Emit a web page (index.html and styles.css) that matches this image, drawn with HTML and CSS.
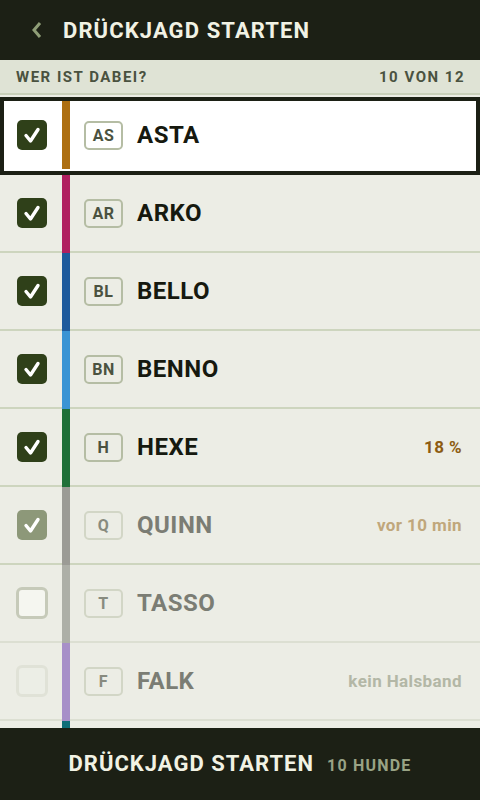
FILE: index.html
```html
<!DOCTYPE html>
<html lang="de">
<head>
<meta charset="UTF-8">
<meta name="viewport" content="width=device-width, initial-scale=1.0">
<title>Drückjagd starten</title>
<link rel="stylesheet" href="styles.css">
</head>
<body>

<div class="screen">
<div class="topbar">
<svg class="back" width="14" height="20" viewBox="0 0 14 20"><path d="M10 3 L4 10 L10 17" fill="none" stroke="#8f9e77" stroke-width="3"/></svg>
<h1>DRÜCKJAGD STARTEN</h1>
</div>

<div class="subhead">
<span>WER IST DABEI?</span>
<span>10 VON 12</span>
</div>

<div class="list">
<div class="row selected">
<div class="check"><div class="box on"><svg width="30" height="30" viewBox="0 0 30 30"><path d="M9 15.5 L13.5 21 L21 9.5" fill="none" stroke="#fff" stroke-width="3.4" stroke-linecap="round" stroke-linejoin="round"/></svg></div></div>
<div class="stripe" style="background:#ad6f12"></div>
<div class="info"><span class="badge">AS</span><span class="name">ASTA</span></div>
</div>

<div class="row">
<div class="check"><div class="box on"><svg width="30" height="30" viewBox="0 0 30 30"><path d="M9 15.5 L13.5 21 L21 9.5" fill="none" stroke="#fff" stroke-width="3.4" stroke-linecap="round" stroke-linejoin="round"/></svg></div></div>
<div class="stripe" style="background:#b01f60"></div>
<div class="info"><span class="badge">AR</span><span class="name">ARKO</span></div>
</div>

<div class="row">
<div class="check"><div class="box on"><svg width="30" height="30" viewBox="0 0 30 30"><path d="M9 15.5 L13.5 21 L21 9.5" fill="none" stroke="#fff" stroke-width="3.4" stroke-linecap="round" stroke-linejoin="round"/></svg></div></div>
<div class="stripe" style="background:#1e5a9c"></div>
<div class="info"><span class="badge">BL</span><span class="name">BELLO</span></div>
</div>

<div class="row">
<div class="check"><div class="box on"><svg width="30" height="30" viewBox="0 0 30 30"><path d="M9 15.5 L13.5 21 L21 9.5" fill="none" stroke="#fff" stroke-width="3.4" stroke-linecap="round" stroke-linejoin="round"/></svg></div></div>
<div class="stripe" style="background:#3a94d4"></div>
<div class="info"><span class="badge">BN</span><span class="name">BENNO</span></div>
</div>

<div class="row">
<div class="check"><div class="box on"><svg width="30" height="30" viewBox="0 0 30 30"><path d="M9 15.5 L13.5 21 L21 9.5" fill="none" stroke="#fff" stroke-width="3.4" stroke-linecap="round" stroke-linejoin="round"/></svg></div></div>
<div class="stripe" style="background:#1f6f38"></div>
<div class="info"><span class="badge">H</span><span class="name">HEXE</span><span class="meta battery">18 %</span></div>
</div>

<div class="row dim">
<div class="check"><div class="box faded"><svg width="30" height="30" viewBox="0 0 30 30"><path d="M9 15.5 L13.5 21 L21 9.5" fill="none" stroke="#fff" stroke-width="3.4" stroke-linecap="round" stroke-linejoin="round"/></svg></div></div>
<div class="stripe" style="background:#9b9b95"></div>
<div class="info"><span class="badge">Q</span><span class="name">QUINN</span><span class="meta seen">vor 10 min</span></div>
</div>

<div class="row dim light">
<div class="check"><div class="box off"></div></div>
<div class="stripe" style="background:#adafa7"></div>
<div class="info"><span class="badge">T</span><span class="name">TASSO</span></div>
</div>

<div class="row dim light">
<div class="check"><div class="box disabled"></div></div>
<div class="stripe" style="background:#a78fc8"></div>
<div class="info"><span class="badge">F</span><span class="name">FALK</span><span class="meta nocollar">kein Halsband</span></div>
</div>

<!-- next row, mostly hidden behind the footer -->
<div class="row dim light">
<div class="check"></div>
<div class="stripe" style="background:#0f6e78"></div>
<div class="info"></div>
</div>
</div>

<div class="footer">
<span class="go">DRÜCKJAGD STARTEN</span>
<span class="count">10 HUNDE</span>
</div>
</div>

</body>
</html>
```

FILE: styles.css
```css
body {
    margin: 0;
    padding: 0;
    font-family: Roboto, "Liberation Sans", sans-serif;
    background-color: #ecede5;
}

.screen {
    width: 480px;
    height: 800px;
    display: flex;
    flex-direction: column;
    overflow: hidden;
}

.topbar {
    height: 60px;
    flex-shrink: 0;
    background-color: #1c2015;
    display: flex;
    align-items: center;
    padding-left: 30px;
    gap: 19px;
}

.topbar h1 {
    margin: 0;
    font-size: 22px;
    font-weight: 700;
    letter-spacing: 1.1px;
    color: #f1f2e4;
}

.subhead {
    height: 33px;
    flex-shrink: 0;
    background-color: #dfe3d5;
    border-bottom: 2px solid #c9d0ba;
    display: flex;
    align-items: center;
    justify-content: space-between;
    padding: 0 15px 0 16px;
    font-size: 15px;
    font-weight: 700;
    letter-spacing: 1.5px;
    color: #4a5240;
}

.list {
    flex: 1;
    overflow: hidden;
    padding-top: 2px;
    background-color: #ecede5;
}

.row {
    height: 76px;
    display: flex;
    border-bottom: 2px solid #cdd5be;
    background-color: #ecede5;
}

.row.light {
    border-bottom-color: #dcdfd2;
}

.row.selected {
    background-color: #fff;
    outline: 4px solid #1c2015;
    outline-offset: -4px;
    border-bottom-color: #1c2015;
}

.check {
    width: 62px;
    flex-shrink: 0;
    display: flex;
    align-items: center;
    padding-left: 17px;
    box-sizing: border-box;
}

.box {
    width: 30px;
    height: 30px;
    border-radius: 5px;
    box-sizing: border-box;
}

.box svg {
    display: block;
}

.box.on {
    background-color: #2f4019;
}

.box.faded {
    background-color: #8d9879;
}

.box.off {
    background-color: #f5f6f0;
    border: 3px solid #c6cab9;
    border-radius: 6px;
    margin-left: -1px;
    width: 32px;
    height: 32px;
}

.box.disabled {
    background-color: #eceee6;
    border: 3px solid #e0e2d7;
    border-radius: 6px;
    margin-left: -1px;
    width: 32px;
    height: 32px;
}

.stripe {
    width: 8px;
    flex-shrink: 0;
    margin-bottom: -2px;
}

.row.selected .stripe {
    margin: 4px 0;
}

.info {
    flex: 1;
    display: flex;
    align-items: center;
    padding: 0 18px 0 14px;
}

.badge {
    width: 39px;
    height: 29px;
    box-sizing: border-box;
    border: 2px solid #b5bda4;
    border-radius: 5px;
    display: flex;
    align-items: center;
    justify-content: center;
    font-size: 16px;
    font-weight: 700;
    letter-spacing: 0.5px;
    color: #4b5240;
}

.name {
    margin-left: 14px;
    font-size: 24px;
    font-weight: 700;
    letter-spacing: 0.5px;
    color: #16190f;
}

.meta {
    margin-left: auto;
    font-size: 17px;
    font-weight: 700;
    letter-spacing: 0.4px;
}

.battery {
    color: #8c5c12;
}

.seen {
    color: #c0a77b;
}

.nocollar {
    color: #b3b7a6;
}

.row.dim .name {
    color: #7b7d74;
}

.row.dim .badge {
    border-color: #d2d6c6;
    color: #888b7f;
}

.footer {
    height: 72px;
    flex-shrink: 0;
    background-color: #1c2015;
    display: flex;
    align-items: center;
    justify-content: center;
    gap: 13px;
    line-height: 1.2;
}

.go {
    font-size: 22px;
    font-weight: 700;
    letter-spacing: 1px;
    color: #f1f2e4;
}

.count {
    font-size: 16px;
    font-weight: 700;
    letter-spacing: 1.2px;
    color: #99a385;
    padding-top: 3px;
}
```
